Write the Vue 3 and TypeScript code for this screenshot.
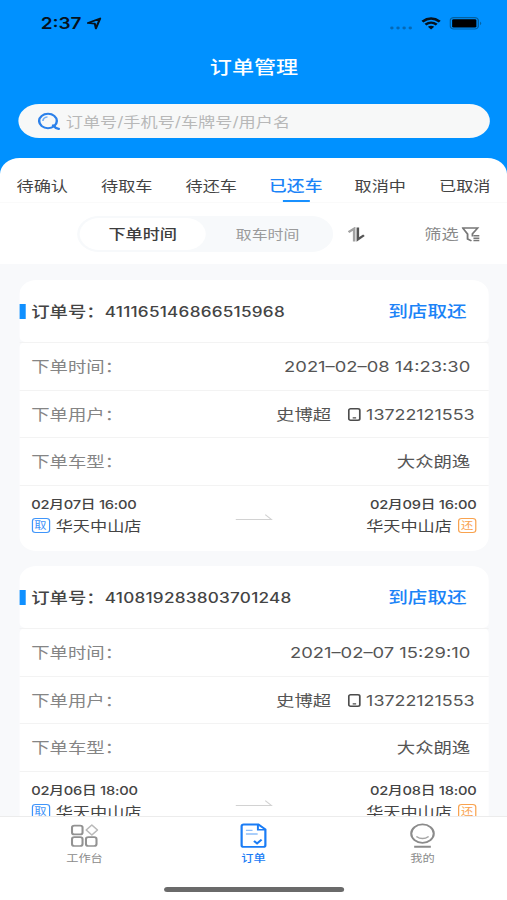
<script setup lang="ts">
import { ref } from 'vue'

interface Order {
  no: string
  mode: string
  created: string
  user: string
  phone: string
  model: string
  pickAt: string
  pickStore: string
  backAt: string
  backStore: string
}

const tabs: string[] = ['待确认', '待取车', '待还车', '已还车', '取消中', '已取消']
const activeTab = ref(3)
const sortBy = ref<'order' | 'pick'>('order')
const keyword = ref('')

const orders: Order[] = [
  {
    no: '411165146866515968',
    mode: '到店取还',
    created: '2021–02–08 14:23:30',
    user: '史博超',
    phone: '13722121553',
    model: '大众朗逸',
    pickAt: '02月07日 16:00',
    pickStore: '华天中山店',
    backAt: '02月09日 16:00',
    backStore: '华天中山店',
  },
  {
    no: '410819283803701248',
    mode: '到店取还',
    created: '2021–02–07 15:29:10',
    user: '史博超',
    phone: '13722121553',
    model: '大众朗逸',
    pickAt: '02月06日 18:00',
    pickStore: '华天中山店',
    backAt: '02月08日 18:00',
    backStore: '华天中山店',
  },
]
</script>

<template>
  <div class="viewport">
    <div class="screen">
      <header class="top">
        <div class="status">
          <div class="clock">
            <span>2:37</span>
            <svg width="12" height="13" viewBox="0 0 12 13">
              <path d="M0.8 6 L10.8 1.4 L7.3 11.4 L6.4 6.6 Z" fill="none" stroke="#06121c" stroke-width="1.7" stroke-linejoin="round" />
            </svg>
          </div>
          <div class="signals">
            <svg class="dots" width="19" height="4" viewBox="0 0 19 4" fill="#0568b4">
              <circle cx="2" cy="2" r="1.4" /><circle cx="7" cy="2" r="1.4" />
              <circle cx="12" cy="2" r="1.4" /><circle cx="17" cy="2" r="1.4" />
            </svg>
            <svg class="wifi" width="16" height="13" viewBox="0 0 16 13" fill="none" stroke="#06121c">
              <path d="M0.9 4.6 Q8 -1.6 15.1 4.6" stroke-width="2.5" />
              <path d="M3.4 7.6 Q8 3.6 12.6 7.6" stroke-width="2.3" />
              <path d="M5.4 9.8 Q8 7.6 10.6 9.8 L8 12.6 Z" fill="#06121c" stroke="none" />
            </svg>
            <svg class="battery" width="27" height="13" viewBox="0 0 27 13">
              <rect x="0.6" y="0.6" width="23" height="11.4" rx="3" fill="none" stroke="#04609f" stroke-width="1.1" />
              <rect x="2.2" y="2.2" width="19.8" height="8.2" rx="1.2" fill="#000" />
              <path d="M25 4.4 Q27 6.3 25 8.2 Z" fill="#04609f" />
            </svg>
          </div>
        </div>
        <h1>订单管理</h1>
        <label class="search">
          <svg width="18" height="19" viewBox="0 0 18 19" fill="none" stroke="#2b80ea">
            <circle cx="8.2" cy="9" r="7.2" stroke-width="2" />
            <path d="M4 9 Q4.3 5.4 7.8 4.9" stroke-width="1.3" stroke="#75aef2" />
            <path d="M12.4 13.4 Q14.2 16.4 17 16.9" stroke-width="2.1" stroke-linecap="round" />
          </svg>
          <input v-model="keyword" placeholder="订单号/手机号/车牌号/用户名" />
        </label>
      </header>

      <section class="panel">
        <nav class="tabs">
          <button v-for="(t, i) in tabs" :key="t" :class="{ on: i === activeTab }" @click="activeTab = i">{{ t }}</button>
        </nav>
        <div class="tools">
          <div class="segment">
            <button :class="{ on: sortBy === 'order' }" @click="sortBy = 'order'">下单时间</button>
            <button :class="{ on: sortBy === 'pick' }" @click="sortBy = 'pick'">取车时间</button>
          </div>
          <svg class="sort" width="14" height="15" viewBox="0 0 14 15" fill="none" stroke-width="2.1">
            <path d="M0.6 5.2 L5.2 1.6 V14.4" stroke="#a2a2a2" />
            <path d="M8.2 0.6 V12.4 L13.2 8.2" stroke="#555" />
          </svg>
          <div class="filter">
            <span>筛选</span>
            <svg width="15" height="15" viewBox="0 0 15 15" fill="none" stroke="#777" stroke-width="1.5">
              <path d="M8 13.8 L4.8 12 V7 L0.9 1.1 H13 L8.8 6.8 V9.4" />
              <path d="M9.6 8.8 H14.4 M9.6 11.2 H14.4 M9.6 13.5 H14.4" stroke-width="1.4" />
            </svg>
          </div>
        </div>
      </section>

      <main class="list">
        <article v-for="o in orders" :key="o.no" class="card">
          <div class="head">
            <i class="mark"></i>
            <span class="title">订单号：</span>
            <span class="no">{{ o.no }}</span>
            <span class="mode">{{ o.mode }}</span>
          </div>
          <div class="body">
            <div class="row">
              <span class="label">下单时间：</span><span class="value">{{ o.created }}</span>
            </div>
            <div class="row user">
              <span class="label">下单用户：</span>
              <span class="value name">{{ o.user }}</span>
              <svg width="11" height="13" viewBox="0 0 11 13" fill="none" stroke="#4c4c4c">
                <rect x="0.8" y="0.8" width="9" height="11.4" rx="1.5" stroke-width="1.4" />
                <path d="M4 9.8 H6.8" stroke-width="1.2" />
              </svg>
              <span class="value phone">{{ o.phone }}</span>
            </div>
            <div class="row">
              <span class="label">下单车型：</span><span class="value">{{ o.model }}</span>
            </div>
            <div class="trip">
              <div class="stop">
                <time>{{ o.pickAt }}</time>
                <div class="store"><em class="tag pick">取</em><span>{{ o.pickStore }}</span></div>
              </div>
              <svg class="arrow" width="31" height="8" viewBox="0 0 31 8" fill="none" stroke="#d2d2d2" stroke-width="1">
                <path d="M0.5 6.5 H29.6 L24.6 1.6" />
              </svg>
              <div class="stop end">
                <time>{{ o.backAt }}</time>
                <div class="store"><span>{{ o.backStore }}</span><em class="tag back">还</em></div>
              </div>
            </div>
          </div>
        </article>
      </main>

      <footer class="bar">
        <div class="items">
          <a class="item">
            <svg width="24" height="26" viewBox="0 0 24 26" fill="none" stroke="#929292" stroke-width="1.7">
              <rect x="1.8" y="2.6" width="8.6" height="8.8" rx="2" />
              <path d="M18 2 L22.6 7 L18 12 L13.4 7 Z" stroke="#b9b9b9" stroke-width="1.2" stroke-linejoin="round" />
              <rect x="1.8" y="14.2" width="8.6" height="8.8" rx="2" />
              <rect x="13.2" y="14.2" width="8.6" height="8.8" rx="2" />
            </svg>
            <span>工作台</span>
          </a>
          <a class="item on">
            <svg width="24" height="26" viewBox="0 0 24 26" fill="none" stroke="#1a7cf5" stroke-width="1.8">
              <path d="M16 1.5 H4 Q2.3 1.5 2.3 3.2 V22.2 Q2.3 23.9 4 23.9 H20 Q21.7 23.9 21.7 22.2 V6.4 Z" />
              <path d="M15.6 1.8 V6.8 H21.4" stroke-width="1.6" />
              <path d="M5.8 7.4 H11.2 M5.8 11 H15.4" stroke="#8fbef9" stroke-width="1.4" />
              <path d="M12.4 18 L14.9 20.4 L18.6 16.6" stroke-width="1.8" />
            </svg>
            <span>订单</span>
          </a>
          <a class="item">
            <svg width="24" height="26" viewBox="0 0 24 26" fill="none" stroke="#8b8b8b" stroke-width="1.7">
              <ellipse cx="12" cy="10.6" rx="9.2" ry="9.2" />
              <path d="M7 13.4 Q12 17.6 17 13.4" stroke="#a5a5a5" stroke-width="1.3" />
              <path d="M5.2 23.8 H18.8" stroke-width="2.1" />
            </svg>
            <span>我的</span>
          </a>
        </div>
        <div class="indicator"></div>
      </footer>
    </div>
  </div>
</template>

<style>
body {
  margin: 0;
  overflow: hidden;
}
</style>

<style scoped>
* {
  box-sizing: border-box;
}

.viewport {
  width: 507px;
  height: 900px;
  overflow: hidden;
}

/* 414pt wide layout stretched across the full viewport width */
.screen {
  display: flex;
  flex-direction: column;
  width: 414px;
  height: 900px;
  transform: scaleX(1.22464);
  transform-origin: 0 0;
  background: #f8f9fb;
  color: #444;
  font-family: Inter, 'Noto Sans CJK SC', sans-serif;
  font-size: 14px;
  line-height: 20px;
  white-space: nowrap;
}

button,
input {
  margin: 0;
  padding: 0;
  border: 0;
  background: none;
  font: inherit;
  color: inherit;
}

svg {
  display: block;
  flex: none;
}

.top {
  flex: none;
  height: 175px;
  padding: 13px 14px 0 14.7px;
  background: #0091ff;
}

.status {
  display: flex;
  justify-content: space-between;
  align-items: center;
  height: 21px;
  padding: 0 6px 0 18.5px;
}

.clock {
  display: flex;
  align-items: center;
  gap: 4px;
  color: #06121c;
  font-size: 15.5px;
  font-weight: 600;
}

.signals {
  display: flex;
  align-items: center;
}

.dots {
  margin-top: 9px;
}

.wifi {
  margin-left: 7px;
}

.battery {
  margin-left: 7px;
}

h1 {
  margin: 21px 0 0;
  color: #fff;
  text-align: center;
  font-size: 18px;
  line-height: 26px;
  font-weight: 500;
}

.search {
  display: flex;
  align-items: center;
  gap: 4.5px;
  height: 34px;
  margin-top: 23px;
  padding-left: 16.5px;
  border-radius: 17px;
  background: #f7f8f8;
}

.search input {
  flex: 1;
  height: 22px;
  outline: none;
  font-size: 14px;
}

.search input::placeholder {
  color: #b8b8b8;
  opacity: 1;
}

.panel {
  flex: none;
  height: 106px;
  margin-top: -17px;
  border-radius: 16px 16px 0 0;
  background: #fff;
}

.tabs {
  display: grid;
  grid-template-columns: repeat(6, 1fr);
  height: 45px;
  border-bottom: 1px solid #fafafa;
}

.tabs button {
  display: flex;
  flex-direction: column;
  align-items: center;
  justify-content: space-between;
  padding-top: 18px;
}

.tabs .on {
  color: #1b83f7;
  font-size: 14.5px;
  font-weight: 500;
}

.tabs .on::after {
  content: '';
  width: 22px;
  height: 2.5px;
  background: #1890ff;
}

.tools {
  display: flex;
  align-items: center;
  padding: 13px 22px 0 63px;
}

.segment {
  display: grid;
  grid-template-columns: 103px 101px;
  height: 36px;
  width: 209px;
  padding: 2px;
  border-radius: 18px;
  background: #f7f9fb;
}

.segment button {
  border-radius: 16px;
  color: #9b9b9b;
  font-size: 13px;
}

.segment .on {
  background: #fff;
  color: #3d3d3d;
  font-size: 14px;
  font-weight: 500;
}

.sort {
  margin-left: 12px;
}

.filter {
  display: flex;
  align-items: center;
  gap: 2.5px;
  margin-left: auto;
  color: #8a8a8a;
}

.list {
  flex: 1;
  min-height: 0;
  overflow: hidden;
  padding: 16px 15.5px 0;
}

.card {
  height: 271px;
  margin-bottom: 15px;
}

.head {
  display: flex;
  align-items: center;
  height: 62px;
  padding-right: 17.5px;
  border-radius: 14px 14px 5px 5px;
  background: #fff;
  font-size: 15px;
}

.mark {
  width: 5px;
  height: 15px;
  background: #1090ff;
}

.title {
  margin: 1px 0 0 5px;
  font-weight: 500;
}

.no {
  margin-top: 1px;
  font-size: 14px;
  font-weight: 500;
  letter-spacing: 0.2px;
}

.mode {
  margin-left: auto;
  color: #1b83f7;
  font-size: 16px;
  font-weight: 500;
}

.body {
  height: 209px;
  border-radius: 5px 5px 14px 14px;
  background: #fff;
}

.row {
  display: flex;
  align-items: center;
  height: 47.5px;
  padding: 2px 14.5px 0 10px;
  border-top: 1px solid #f3f3f3;
}

.row.user {
  padding-right: 11px;
}

.label {
  margin-right: auto;
  color: #858585;
  font-size: 15px;
}

.value {
  font-size: 15px;
  color: #555;
}

.name {
  margin-right: 14px;
}

.phone {
  margin-left: 3.5px;
  font-size: 14.6px;
}

.trip {
  display: flex;
  justify-content: space-between;
  height: 66px;
  padding: 9px 9.5px 0 10px;
  border-top: 1px solid #f3f3f3;
}

.stop {
  display: flex;
  flex-direction: column;
  width: 130px;
}

.stop time {
  font-size: 12px;
  font-weight: 500;
  letter-spacing: -0.2px;
}

.end {
  align-items: flex-end;
}

.store {
  display: flex;
  align-items: center;
  gap: 5px;
  margin-top: 1px;
}

.tag {
  width: 15px;
  height: 15px;
  border: 1px solid;
  border-radius: 3px;
  text-align: center;
  font-size: 10px;
  line-height: 13px;
  font-style: normal;
}

.pick {
  color: #3f95fa;
}

.back {
  color: #f9a34f;
}

.arrow {
  margin-top: 18px;
}

.bar {
  flex: none;
  height: 84px;
  border-top: 1px solid #ececec;
  background: #fff;
}

.items {
  display: grid;
  grid-template-columns: repeat(3, 1fr);
  height: 70px;
}

.item {
  display: flex;
  flex-direction: column;
  align-items: center;
  padding-top: 6px;
  color: #8b8b8b;
  font-size: 10px;
  line-height: 14px;
}

.item span {
  margin-top: 2px;
}

.item.on {
  color: #1a7cf5;
  font-weight: 500;
}

.indicator {
  width: 147px;
  height: 5px;
  margin: 0 auto;
  border-radius: 3px;
  background: #6a6a6a;
}
</style>
